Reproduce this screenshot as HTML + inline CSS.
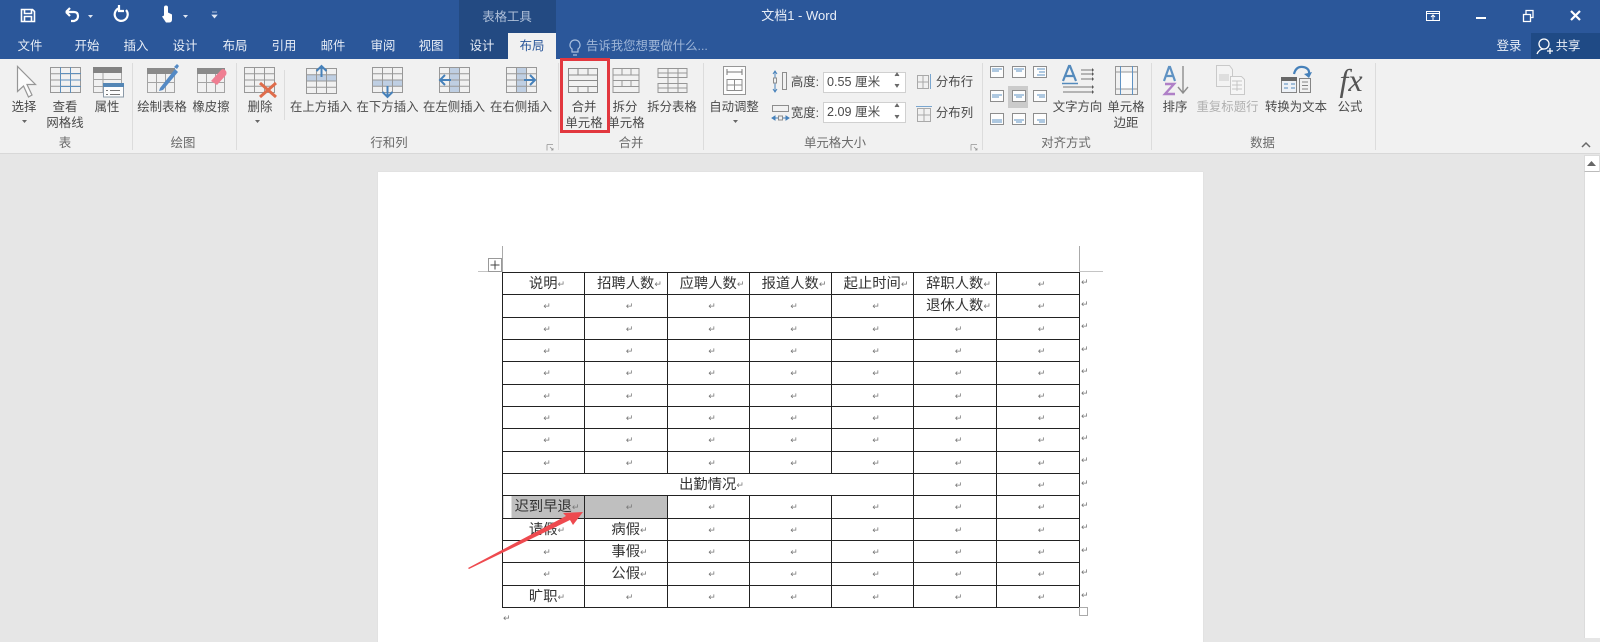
<!DOCTYPE html>
<html lang="zh"><head><meta charset="utf-8"><title>文档1 - Word</title>
<style>
*{box-sizing:border-box}
html,body{margin:0;padding:0}
body{width:1600px;height:638px;position:relative;overflow:hidden;background:#e6e6e6;font-family:"Liberation Sans","Noto Sans CJK SC",sans-serif}
div{position:absolute}
.t{position:absolute;transform:translateX(-50%);white-space:nowrap;font-size:12.4px;line-height:18px;color:#4a4a4a}
.w{color:#e8eef7}
.g{color:#6a6a6a}
svg{position:absolute;left:0;top:0}
table{position:absolute;left:502px;top:272px;width:577px;height:335px;border-collapse:collapse;table-layout:fixed;font-family:"Liberation Sans","Noto Sans CJK SC",sans-serif;font-size:14.3px;color:#333}
td{border:1px solid #222;padding:4px 0 0 7px;text-align:center;height:22.33px;line-height:15px;white-space:nowrap;overflow:hidden}
i{font-style:normal;font-size:9px;color:#777;font-family:"DejaVu Sans",sans-serif;position:relative;top:-1px}
.s{background:#bfbfbf}
.m{position:absolute;font-size:9px;color:#777;font-family:"DejaVu Sans",sans-serif;left:1081px;line-height:10px}
.b{position:absolute;background:#fff;border:1px solid #d0d0d0;font-size:12.6px;line-height:19px;color:#4a4a4a;padding-left:3px}
</style></head>
<body>
<div style="left:0;top:0;width:1600px;height:59px;background:#2b579a"></div>
<div style="left:459px;top:0;width:97px;height:59px;background:#234a82"></div>
<div style="left:1531px;top:33px;width:69px;height:26px;background:#1f4a85"></div>
<div style="left:508px;top:33px;width:48px;height:26px;background:#f1f1f1"></div>
<div style="left:0;top:59px;width:1600px;height:94px;background:#f1f1f1"></div>
<div style="left:0;top:153px;width:1600px;height:1px;background:#d8d8d8"></div>
<div style="left:132px;top:63px;width:1px;height:87px;background:#dcdcdc"></div>
<div style="left:236px;top:63px;width:1px;height:87px;background:#dcdcdc"></div>
<div style="left:284px;top:70px;width:1px;height:50px;background:#dcdcdc"></div>
<div style="left:558px;top:63px;width:1px;height:87px;background:#dcdcdc"></div>
<div style="left:703px;top:63px;width:1px;height:87px;background:#dcdcdc"></div>
<div style="left:982px;top:63px;width:1px;height:87px;background:#dcdcdc"></div>
<div style="left:1151px;top:63px;width:1px;height:87px;background:#dcdcdc"></div>
<div style="left:1375px;top:63px;width:1px;height:87px;background:#dcdcdc"></div>

<!-- title/tabs -->
<span class="t" style="left:507px;top:8px;color:#aebfd8">表格工具</span>
<span class="t w" style="left:799px;top:7px;font-size:13px">文档1 - Word</span>
<span class="t w" style="left:30px;top:37px">文件</span>
<span class="t w" style="left:87px;top:37px">开始</span>
<span class="t w" style="left:136px;top:37px">插入</span>
<span class="t w" style="left:185px;top:37px">设计</span>
<span class="t w" style="left:235px;top:37px">布局</span>
<span class="t w" style="left:284px;top:37px">引用</span>
<span class="t w" style="left:333px;top:37px">邮件</span>
<span class="t w" style="left:383px;top:37px">审阅</span>
<span class="t w" style="left:431px;top:37px">视图</span>
<span class="t w" style="left:482px;top:37px">设计</span>
<span class="t" style="left:532px;top:37px;color:#2b579a">布局</span>
<span class="t" style="left:586px;top:37px;transform:none;color:#9fb6d8">告诉我您想要做什么...</span>
<span class="t w" style="left:1509px;top:37px">登录</span>
<span class="t w" style="left:1568px;top:37px">共享</span>

<!-- ribbon labels -->
<span class="t" style="left:24px;top:98px">选择</span>
<span class="t" style="left:65px;top:98px">查看</span>
<span class="t" style="left:65px;top:114px">网格线</span>
<span class="t" style="left:107px;top:98px">属性</span>
<span class="t" style="left:162px;top:98px">绘制表格</span>
<span class="t" style="left:211px;top:98px">橡皮擦</span>
<span class="t" style="left:260px;top:98px">删除</span>
<span class="t" style="left:321px;top:98px">在上方插入</span>
<span class="t" style="left:387.5px;top:98px">在下方插入</span>
<span class="t" style="left:454px;top:98px">在左侧插入</span>
<span class="t" style="left:521px;top:98px">在右侧插入</span>
<span class="t" style="left:625px;top:98px">拆分</span>
<span class="t" style="left:626px;top:114px">单元格</span>
<span class="t" style="left:584px;top:98px">合并</span>
<span class="t" style="left:584px;top:114px">单元格</span>
<span class="t" style="left:672px;top:98px">拆分表格</span>
<span class="t" style="left:734px;top:98px">自动调整</span>
<span class="t" style="left:1077.5px;top:98px">文字方向</span>
<span class="t" style="left:1126px;top:98px">单元格</span>
<span class="t" style="left:1126px;top:114px">边距</span>
<span class="t" style="left:1175px;top:98px">排序</span>
<span class="t" style="left:1227.5px;top:98px;color:#b0b0b0">重复标题行</span>
<span class="t" style="left:1296px;top:98px">转换为文本</span>
<span class="t" style="left:1350px;top:98px">公式</span>
<span class="t" style="left:805px;top:73px">高度:</span>
<span class="t" style="left:805px;top:104px">宽度:</span>
<span class="t" style="left:954.5px;top:73px">分布行</span>
<span class="t" style="left:954.5px;top:104px">分布列</span>
<div class="b" style="left:823px;top:72px;width:83px;height:21px">0.55 厘米</div>
<div class="b" style="left:823px;top:102px;width:83px;height:21px">2.09 厘米</div>
<span class="t g" style="left:65px;top:134px">表</span>
<span class="t g" style="left:183px;top:134px">绘图</span>
<span class="t g" style="left:389px;top:134px">行和列</span>
<span class="t g" style="left:631px;top:134px">合并</span>
<span class="t g" style="left:835px;top:134px">单元格大小</span>
<span class="t g" style="left:1066px;top:134px">对齐方式</span>
<span class="t g" style="left:1262.5px;top:134px">数据</span>
<span class="t" style="left:1351px;top:62px;font-family:'Liberation Serif',serif;font-style:italic;font-size:32px;line-height:36px;color:#555">fx</span>

<!-- icons -->
<svg width="1600" height="160" viewBox="0 0 1600 160" fill="none">
<defs>
<symbol id="gr" viewBox="0 0 31 26" width="31" height="26" overflow="visible"><path d="M.5.5h30v25H.5zM.5 6.700h30M.5 13h30M.5 19.200h30M10.500.5v25M20.500.5v25" stroke="#8c8c8c"/></symbol>
<symbol id="hd" viewBox="0 0 28 25" width="28" height="25" overflow="visible"><path d="M.5 5.500h27v19H.5zM.5 14.500h27M9.500 5.500v19M18.500 5.500v19" stroke="#9a9a9a"/><path d="M0 0h28v6H0z" fill="#7c7c7c"/></symbol>
<symbol id="al" viewBox="0 0 14 12" width="14" height="12" overflow="visible"><path d="M.5.5h13v11H.5z" stroke="#808080" fill="#fff"/></symbol>
</defs>
<!-- QAT -->
<path d="M21.500 9.500h11l2 2v10h-13zM24.500 9.500v4h7v-4M24.500 21.500v-5h7v5" stroke="#fff" stroke-width="1.600"/>
<path d="M66 12l4-4M66 12l4 4M66 12h8q4 0 4 4t-4 5h-3" stroke="#fff" stroke-width="2.200"/>
<path d="M88 15h5l-2.500 3z" fill="#dfe6f2"/>
<path d="M120 8a6.500 6.500 0 1 0 6 2M119 5v6h5" stroke="#fff" stroke-width="2.200"/>
<path d="M164 7.500a2 2 0 0 1 4 0v5l4 2v5q0 3-3 3h-3l-4-6 2-1z" fill="#fff"/>
<path d="M183 15h5l-2.500 3z" fill="#dfe6f2"/>
<path d="M212 12h5M212 15h5l-2.500 3z" stroke="#dfe6f2" fill="#dfe6f2" stroke-width=".7"/>
<!-- window -->
<path d="M1426.500 11.500h13v9h-13zM1426.500 13.500h13M1433 20v-5M1431 17l2-2 2 2" stroke="#fff"/>
<path d="M1476 18h10" stroke="#fff" stroke-width="2"/>
<path d="M1523.500 14.500h7v7h-7zM1526 14v-3.500h7v7h-3" stroke="#fff" stroke-width="1.300"/>
<path d="M1571 11l9 9M1580 11l-9 9" stroke="#fff" stroke-width="2.200"/>
<!-- tell me / share -->
<path d="M575 40a5 5 0 0 1 3 9v3h-6v-3a5 5 0 0 1 3-9zM573 55h4" stroke="#aac0de" stroke-width="1.200"/>
<path d="M1544 39a5 5 0 1 1 0 10 5 5 0 0 1 0-10zM1537 54q2-5 7-5M1547 51h6M1550 48v6" stroke="#fff" stroke-width="1.300"/>
<g opacity=".88">
<!-- 选择 cursor -->
<path d="M17.500 66.500v25l6-5.500 5 11 3.500-2-5-10.500h8.500z" stroke="#8a8a8a" fill="#fdfdfd" stroke-width="1.200"/>
<!-- 查看网格线 -->
<use href="#gr" x="50" y="67"/><path d="M60 73.500h21M60 80h21M60 86.500h21M60.500 67v26M70.500 67v26" stroke="#4c82b4"/>
<!-- 属性 -->
<path d="M93.500 72.500h28v20h-28zM93.500 79.500h28M93.500 86.500h28M103 72v21" stroke="#9a9a9a"/><path d="M93 67h29v6H93z" fill="#737373"/>
<path d="M103.500 83.500h20v13.500h-20z" fill="#fff" stroke="#7f8f9f"/><path d="M103 83h21v4h-21z" fill="#3f78ad"/><path d="M106 90.500h2M110 90.500h10M106 94.500h2M110 94.500h10" stroke="#666"/>
<!-- 绘制 -->
<use href="#hd" x="147" y="68"/><path d="M160 88l15-19 3 3-15 18-4 1z" fill="#3f7cbf"/><path d="M174 67l3-3 2 2-2 3z" fill="#3f7cbf"/>
<!-- 橡皮擦 -->
<use href="#hd" x="197" y="68"/><path d="M211 81l10-11q2-2 4 0l1 1q1 2 0 4l-9 10z" fill="#ef6f85"/>
<!-- 删除 -->
<use href="#gr" x="244" y="67"/><path d="M260 83l16 14M276 83l-16 14" stroke="#dd5a35" stroke-width="3"/>
<!-- insert -->
<rect x="306" y="75" width="31" height="6" fill="#b9cbe2"/><use href="#gr" x="306" y="68"/><path d="M321.500 77v-11M316.500 71l5-5 5 5" stroke="#2f72b3" stroke-width="2"/>
<rect x="372" y="80" width="31" height="6" fill="#b9cbe2"/><use href="#gr" x="372" y="67"/><path d="M387.500 86v11M382.500 92l5 5 5-5" stroke="#2f72b3" stroke-width="2"/>
<rect x="449" y="67" width="10" height="26" fill="#b9cbe2"/><use href="#gr" x="439" y="67"/><path d="M451 80h-11M445 75l-5 5 5 5" stroke="#2f72b3" stroke-width="2"/>
<rect x="516" y="67" width="10" height="26" fill="#b9cbe2"/><use href="#gr" x="506" y="67"/><path d="M524 80h11M530 75l5 5-5 5" stroke="#2f72b3" stroke-width="2"/>
<!-- merge / split -->
<path d="M568.500 68.500h29v24h-29zM568.500 75h29M568.500 80.500h29M568.500 86.500h29M578 68v7M588 68v7M578 86v7M588 86v7" stroke="#7c7c7c"/>
<path d="M613 68.500h26v24h-26zM613 75h26M613 80.500h26M613 86.500h26M622 68v7M631 68v7M622 80v7M631 80v7" stroke="#8a8a8a"/>
<path d="M658 68.500h29v9h-29zM658 83.500h29v9h-29zM658 73h29M658 88h29M668 68v25M678 68v25" stroke="#8a8a8a"/>
<!-- autofit -->
<path d="M723.500 66.500h22v28h-22z" stroke="#8a8a8a" fill="#fff"/><path d="M727 72h15M727 69v6M742 69v6" stroke="#666"/><path d="M727 79.500h15v11h-15zM727 85h15M734.500 79v12" stroke="#808080"/>
<!-- spin icons -->
<path d="M773 74l2-3 2 3M773 89l2 3 2-3M775 71v21" stroke="#2f72b3"/><path d="M782.500 72.500h4v17h-4z" stroke="#808080"/><path d="M773.500 78h3v5h-3z" stroke="#808080" fill="#f1f1f1"/>
<path d="M772.500 105.500h16v6h-16z" stroke="#808080"/><path d="M772 118l3-2v4zM789 118l-3-2v4zM775 118h3M783 118h3" stroke="#2f72b3" fill="#2f72b3"/><path d="M778.500 116h4v4h-4z" stroke="#808080" fill="#f1f1f1"/>
<!-- distribute -->
<path d="M917.500 75.500h11v13h-11zM917.500 82h11M923 75v14" stroke="#a0a0a0"/><path d="M930.500 74v15" stroke="#6a9ccb"/>
<path d="M917.500 108.500h13v13h-13zM924 108v14M917 115h14" stroke="#a0a0a0"/><path d="M916 106.500h16" stroke="#6a9ccb"/>
<!-- align -->
<rect x="1008" y="86" width="20" height="22" fill="#c6c6c6"/>
<use href="#al" x="990" y="66"/><use href="#al" x="1012" y="66"/><use href="#al" x="1033" y="66"/>
<use href="#al" x="990" y="90"/><use href="#al" x="1012" y="90"/><use href="#al" x="1033" y="90"/>
<use href="#al" x="990" y="113"/><use href="#al" x="1012" y="113"/><use href="#al" x="1033" y="113"/>
<path d="M992 69h10M992 71h7M1014 69h10M1016 71h6M1037 69h8M1039 72h6M1037 75h8" stroke="#4c86bd"/>
<path d="M992 95h10M992 97h7M1014 95h10M1016 97h6M1037 95h8M1039 97h6" stroke="#4c86bd"/>
<path d="M992 120h10M992 122h10M1014 120h10M1016 122h6M1037 120h8M1039 122h6" stroke="#4c86bd"/>
<!-- spin arrows -->
<path d="M895 76l2-3 2 3M895 84l2 3 2-3M895 107l2-3 2 3M895 115l2 3 2-3" stroke="#555" fill="#555"/>
<!-- text direction -->
<path d="M1063 81l6-15h1l6 15M1065.500 76h9" stroke="#3f7cb5" stroke-width="2.200"/><path d="M1062 83.500h16" stroke="#3f7cb5" stroke-width="1.500"/>
<path d="M1081 70h11M1081 74h11M1081 79h11M1063 87h29M1063 92h29" stroke="#666"/><path d="M1092 68l2 2-2 2zM1092 72l2 2-2 2zM1092 77l2 2-2 2zM1092 85l2 2-2 2zM1092 90l2 2-2 2z" fill="#444"/>
<!-- cell margins -->
<path d="M1115.500 66.500h22v28h-22zM1115.500 72h22M1115.500 89h22" stroke="#8a8a8a"/><path d="M1120.500 66v29M1132.500 66v29" stroke="#4c86bd"/><rect x="1121" y="72.500" width="11" height="16" fill="#fff"/>
<!-- sort -->
<path d="M1164 81l5-14h1l5 14M1166 76h7" stroke="#4c86bd" stroke-width="2.200"/><path d="M1165 84h9l-9 10h10" stroke="#a671c2" stroke-width="2.400"/><path d="M1183 66v27M1178 87l5 6 5-6" stroke="#808080" stroke-width="1.400"/>
<!-- repeat title -->
<path d="M1216.500 65.500h13l3 4v17h-16z" stroke="#c4c4c4" fill="#f4f4f4"/><path d="M1219 74h10v7h-10z" fill="#dcdcdc"/><path d="M1230.500 76.500h11l3 3v15h-14z" stroke="#c4c4c4" fill="#f7f7f7"/><path d="M1232 81h10M1232 85h10M1232 89h10M1237 81v10" stroke="#c0c0c0"/>
<!-- convert -->
<path d="M1294 74q2-8 9-7t6 8" stroke="#2f72b3" stroke-width="2.200"/><path d="M1304 74l5 4 3-6z" fill="#2f72b3"/>
<path d="M1281.500 77.500h15v15h-15z" fill="#eef3f8" stroke="#777"/><path d="M1281 77h16v4h-16z" fill="#555"/><path d="M1284 84h4M1291 84h4M1284 88h4M1291 88h4" stroke="#3f7cb5"/><path d="M1299.500 78.500h11v14h-11zM1302 82h6M1302 85.500h6M1302 89h6" stroke="#777"/>
<!-- launchers + chevron -->
<path d="M547 144.500h6M547 144.500v6M550 147l3 3M551 150h2v-2" stroke="#888" stroke-width=".8"/>
<path d="M971 144.500h6M971 144.500v6M974 147l3 3M975 150h2v-2" stroke="#888" stroke-width=".8"/>
<path d="M1582 147l4-4 4 4" stroke="#555" stroke-width="1.500"/>
<path d="M22 120h5l-2.500 3zM255 120h5l-2.500 3zM733 120h5l-2.500 3z" fill="#555"/>
</g>
</svg>
<div style="left:560px;top:58px;width:50px;height:75px;border:3px solid #e2383f"></div>

<!-- scrollbar -->
<div style="left:1584px;top:155px;width:16px;height:483px;background:#fff;border-left:1px solid #dcdcdc"></div>
<div style="left:1584px;top:155px;width:16px;height:17px;background:#fff;border:1px solid #dcdcdc;border-bottom:1px solid #bbb"></div>
<svg width="1600" height="638" viewBox="0 0 1600 638" style="z-index:2"><path d="M1587 166l4.500-5 4.500 5z" fill="#666"/></svg>

<!-- page -->
<div style="left:378px;top:172px;width:825px;height:470px;background:#fff;box-shadow:0 0 1px #cfcfcf"></div>
<div style="left:502px;top:246px;width:1px;height:26px;background:#aaa"></div>
<div style="left:1079px;top:246px;width:1px;height:26px;background:#aaa"></div>
<div style="left:478px;top:271px;width:24px;height:1px;background:#c4c4c4"></div>
<div style="left:1079px;top:271px;width:24px;height:1px;background:#c4c4c4"></div>
<svg width="1600" height="638" viewBox="0 0 1600 638" style="z-index:1"><path d="M488.500 258.500h13v13h-13z" stroke="#999" fill="#fff"/><path d="M495 260.500v9M490.500 265h9" stroke="#444"/><path d="M1079.500 607.500h8v8h-8z" stroke="#aaa" fill="#fff"/></svg>

<table>
<colgroup><col style="width:82px"><col style="width:83px"><col style="width:82px"><col style="width:82px"><col style="width:82px"><col style="width:83px"><col style="width:83px"></colgroup>
<tr><td>说明<i>↵</i></td><td>招聘人数<i>↵</i></td><td>应聘人数<i>↵</i></td><td>报道人数<i>↵</i></td><td>起止时间<i>↵</i></td><td>辞职人数<i>↵</i></td><td><i>↵</i></td></tr>
<tr><td><i>↵</i></td><td><i>↵</i></td><td><i>↵</i></td><td><i>↵</i></td><td><i>↵</i></td><td>退休人数<i>↵</i></td><td><i>↵</i></td></tr>
<tr><td><i>↵</i></td><td><i>↵</i></td><td><i>↵</i></td><td><i>↵</i></td><td><i>↵</i></td><td><i>↵</i></td><td><i>↵</i></td></tr>
<tr><td><i>↵</i></td><td><i>↵</i></td><td><i>↵</i></td><td><i>↵</i></td><td><i>↵</i></td><td><i>↵</i></td><td><i>↵</i></td></tr>
<tr><td><i>↵</i></td><td><i>↵</i></td><td><i>↵</i></td><td><i>↵</i></td><td><i>↵</i></td><td><i>↵</i></td><td><i>↵</i></td></tr>
<tr><td><i>↵</i></td><td><i>↵</i></td><td><i>↵</i></td><td><i>↵</i></td><td><i>↵</i></td><td><i>↵</i></td><td><i>↵</i></td></tr>
<tr><td><i>↵</i></td><td><i>↵</i></td><td><i>↵</i></td><td><i>↵</i></td><td><i>↵</i></td><td><i>↵</i></td><td><i>↵</i></td></tr>
<tr><td><i>↵</i></td><td><i>↵</i></td><td><i>↵</i></td><td><i>↵</i></td><td><i>↵</i></td><td><i>↵</i></td><td><i>↵</i></td></tr>
<tr><td><i>↵</i></td><td><i>↵</i></td><td><i>↵</i></td><td><i>↵</i></td><td><i>↵</i></td><td><i>↵</i></td><td><i>↵</i></td></tr>
<tr><td colspan="5">出勤情况<i>↵</i></td><td><i>↵</i></td><td><i>↵</i></td></tr>
<tr><td style="background:linear-gradient(90deg,#fff 8px,#bfbfbf 8px)">迟到早退<i>↵</i></td><td class="s"><i>↵</i></td><td><i>↵</i></td><td><i>↵</i></td><td><i>↵</i></td><td><i>↵</i></td><td><i>↵</i></td></tr>
<tr><td>请假<i>↵</i></td><td>病假<i>↵</i></td><td><i>↵</i></td><td><i>↵</i></td><td><i>↵</i></td><td><i>↵</i></td><td><i>↵</i></td></tr>
<tr><td><i>↵</i></td><td>事假<i>↵</i></td><td><i>↵</i></td><td><i>↵</i></td><td><i>↵</i></td><td><i>↵</i></td><td><i>↵</i></td></tr>
<tr><td><i>↵</i></td><td>公假<i>↵</i></td><td><i>↵</i></td><td><i>↵</i></td><td><i>↵</i></td><td><i>↵</i></td><td><i>↵</i></td></tr>
<tr><td>旷职<i>↵</i></td><td><i>↵</i></td><td><i>↵</i></td><td><i>↵</i></td><td><i>↵</i></td><td><i>↵</i></td><td><i>↵</i></td></tr>
</table>
<span class="m" style="top:278px">↵</span><span class="m" style="top:300px">↵</span><span class="m" style="top:322px">↵</span><span class="m" style="top:345px">↵</span><span class="m" style="top:367px">↵</span><span class="m" style="top:389px">↵</span><span class="m" style="top:412px">↵</span><span class="m" style="top:434px">↵</span><span class="m" style="top:456px">↵</span><span class="m" style="top:479px">↵</span><span class="m" style="top:501px">↵</span><span class="m" style="top:523px">↵</span><span class="m" style="top:546px">↵</span><span class="m" style="top:568px">↵</span><span class="m" style="top:591px">↵</span>
<span class="m" style="top:614px;left:503px">↵</span>

<!-- red arrow -->
<svg width="1600" height="638" viewBox="0 0 1600 638" style="z-index:3"><path d="M468 568L566 516L563 513L583 512L573 525L570 520L469 569z" fill="#ee4a4f"/></svg>
</body></html>
